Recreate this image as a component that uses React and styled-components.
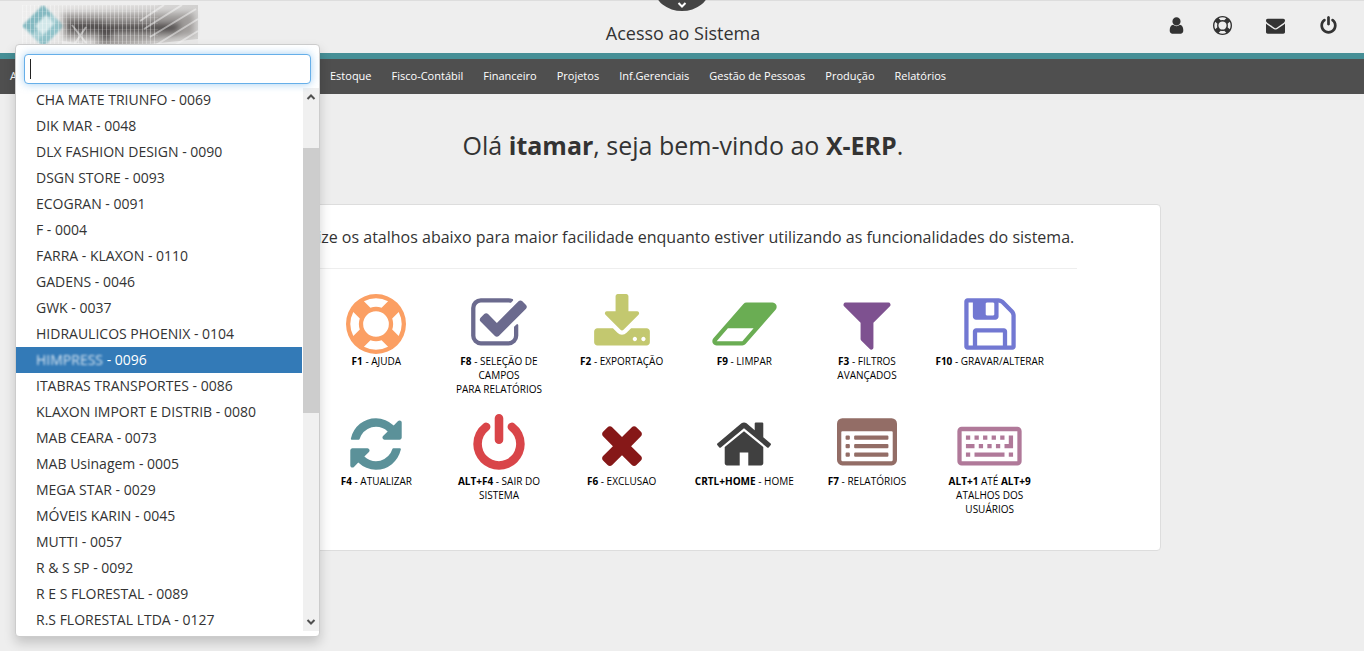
import { useState } from "react";
import styled, { createGlobalStyle } from "styled-components";

const GlobalStyle = createGlobalStyle`
  * {
    box-sizing: border-box;
  }

  body {
    margin: 0;
    color: #333;
    font-size: 14px;
    background-color: #eee;
    font-family: "Open Sans", "Noto Sans", sans-serif;
  }
`;

const StyledPage = styled.div`
  position: relative;
  min-height: 100vh;
  overflow: hidden;
`;

const StyledHeader = styled.header`
  height: 53px;
  display: grid;
  padding: 0 22px;
  position: relative;
  border-top: 1px solid #ddd;
  grid-template-columns: 1fr auto 1fr;
`;

const StyledLogo = styled.a`
  width: 178px;
  height: 42px;
  display: block;
  margin-top: 4px;
`;

const StyledTitle = styled.h1`
  margin: 0;
  padding: 20px 0 0 2px;
  font-size: 18px;
  font-weight: 400;
  line-height: 24px;
`;

const StyledPull = styled.button`
  top: -32px;
  left: 50%;
  width: 54px;
  height: 42px;
  border: 0;
  padding: 0 0 1px;
  display: flex;
  position: absolute;
  align-items: flex-end;
  justify-content: center;
  border-radius: 50%;
  background-color: #444;
  transform: translateX(-50%);
`;

const StyledActions = styled.div`
  gap: 34px;
  display: flex;
  padding: 15px 4px 0 0;
  align-items: flex-start;
  justify-content: flex-end;
`;

const StyledAction = styled.button`
  border: 0;
  padding: 0;
  color: #333;
  display: flex;
  cursor: pointer;
  background: none;
  margin-left: ${(props) => (props.$close ? "-7px" : "0")};
`;

const StyledNav = styled.nav`
  gap: 20px;
  height: 41px;
  display: flex;
  padding: 0 10px 2px;
  align-items: center;
  border-top: 6px solid #468f96;
  background-color: #4f4f4f;
`;

const StyledNavLink = styled.a`
  color: #fff;
  font-size: 11px;
  white-space: nowrap;
  text-decoration: none;
  flex: 0 0 ${(props) => (props.$wide ? "300px" : "auto")};
`;

const StyledMain = styled.main`
  padding: 31px 20px;
`;

const StyledWelcome = styled.h2`
  margin: 0;
  font-size: 25px;
  font-weight: 400;
  line-height: 40px;
  text-align: center;
  padding-left: 2px;
`;

const StyledCard = styled.section`
  width: 100%;
  max-width: 957px;
  min-height: 346px;
  margin: 39px auto 0;
  padding: 16px 83px 16px 85px;
  border-radius: 4px;
  border: 1px solid #ddd;
  background-color: #fff;
`;

const StyledHint = styled.p`
  margin: 0;
  font-size: 16px;
  line-height: 32px;
  text-align: center;
  white-space: nowrap;
  padding-bottom: 15px;
  border-bottom: 1px solid #eee;
`;

const StyledShortcuts = styled.div`
  display: grid;
  max-width: 736px;
  margin: 25px auto 0;
  grid-auto-rows: 120px;
  grid-template-columns: repeat(6, 1fr);
`;

const StyledShortcut = styled.div`
  color: #000;
  display: flex;
  padding: 0 5px;
  font-size: 10px;
  line-height: 14px;
  text-align: center;
  align-items: center;
  flex-direction: column;
`;

const StyledDropdown = styled.div`
  top: 44px;
  left: 15px;
  width: 305px;
  z-index: 10;
  position: absolute;
  border-radius: 4px;
  padding-bottom: 3px;
  border: 1px solid #ccc;
  background-color: #fff;
  box-shadow: 0 6px 12px rgba(0, 0, 0, 0.18);
`;

const StyledSearch = styled.div`
  position: relative;
  padding: 9px 8px 3px;
`;

const StyledInput = styled.input`
  width: 100%;
  height: 30px;
  outline: none;
  font: inherit;
  display: block;
  padding: 4px 5px;
  border-radius: 4px;
  caret-color: transparent;
  border: 1px solid #66afe9;
  box-shadow: 0 0 8px rgba(102, 175, 233, 0.6);
`;

const StyledCaret = styled.span`
  top: 14px;
  left: 14px;
  width: 1px;
  height: 20px;
  position: absolute;
  pointer-events: none;
  background-color: #222;
`;

const StyledListArea = styled.div`
  display: flex;
`;

const StyledList = styled.ul`
  flex: 1;
  margin: 0;
  padding: 0;
  list-style: none;
`;

const StyledOption = styled.button`
  border: 0;
  width: 100%;
  height: 26px;
  display: block;
  font: inherit;
  cursor: pointer;
  text-align: left;
  padding: 0 20px;
  line-height: 26px;
  white-space: nowrap;
  color: ${(props) => (props.$active ? "#fff" : "#333")};
  background-color: ${(props) => (props.$active ? "#337ab7" : "#fff")};
`;

const StyledBlur = styled.span`
  opacity: 0.8;
  filter: blur(1px);
`;

const StyledScroll = styled.div`
  width: 16px;
  display: flex;
  margin: 1px 0 2px 1px;
  flex-direction: column;
  background-color: #f0f0f0;
`;

const StyledScrollButton = styled.button`
  border: 0;
  padding: 0;
  height: 18px;
  display: flex;
  color: #505050;
  background: none;
  align-items: center;
  justify-content: center;
`;

const StyledThumb = styled.div`
  height: 265px;
  margin: 42px 0 auto;
  background-color: #cdcdcd;
`;

// Font Awesome 4 outlines, drawn on a 1792 unit em
const icons = {
  user: {
    d: "M1536 1399q0 109-62.5 187t-150.5 78h-854q-88 0-150.5-78t-62.5-187q0-85 8.5-160.5t31.5-152 58.5-131 94-89 134.5-34.5q131 128 313 128t313-128q76 0 134.5 34.5t94 89 58.5 131 31.5 152 8.5 160.5zm-256-887q0 159-112.5 271.5t-271.5 112.5-271.5-112.5-112.5-271.5 112.5-271.5 271.5-112.5 271.5 112.5 112.5 271.5z",
  },
  envelope: {
    d: "M1792 710v794q0 66-47 113t-113 47h-1472q-66 0-113-47t-47-113v-794q44 49 101 87 362 246 497 345 57 42 92.5 65.5t94.5 48 110 24.5h2q51 0 110-24.5t94.5-48 92.5-65.5q170-123 498-345 57-39 100-87zm0-294q0 79-49 151t-122 123q-376 261-468 325-10 7-42.5 31t-54 38.5-52 32.5-57.5 27-50 9h-2q-23 0-50-9t-57.5-27-52-32.5-54-38.5-42.5-31q-91-64-262-182.5t-205-142.5q-62-42-117-115.5t-55-136.5q0-78 41.5-130t118.5-52h1472q65 0 112.5 47t47.5 113z",
  },
  ring: {
    d: "M896 0q182 0 348 71t286 191 191 286 71 348-71 348-191 286-286 191-348 71-348-71-286-191-191-286-71-348 71-348 191-286 286-191 348-71zm0 128q-190 0-361 90l194 194q82-28 167-28t167 28l194-194q-171-90-361-90zm-678 1129l194-194q-28-82-28-167t28-167l-194-194q-90 171-90 361t90 361zm678 407q190 0 361-90l-194-194q-82 28-167 28t-167-28l-194 194q171 90 361 90zm0-384q159 0 271.5-112.5t112.5-271.5-112.5-271.5-271.5-112.5-271.5 112.5-112.5 271.5 112.5 271.5 271.5 112.5zm484-217l194 194q90-171 90-361t-90-361l-194 194q28 82 28 167t-28 167z",
  },
  power: {
    d: "M1664 896q0 156-61 298t-164 245-245 164-298 61-298-61-245-164-164-245-61-298q0-182 80.5-343t226.5-270q43-32 95.5-25t83.5 50q32 42 24.5 94.5t-49.5 84.5q-98 74-151.5 181t-53.5 228q0 104 40.5 198.5t109.5 163.5 163.5 109.5 198.5 40.5 198.5-40.5 163.5-109.5 109.5-163.5 40.5-198.5q0-121-53.5-228t-151.5-181q-42-32-49.5-84.5t24.5-94.5q31-43 84-50t95 25q146 109 226.5 270t80.5 343zm-640-768v640q0 52-38 90t-90 38-90-38-38-90v-640q0-52 38-90t90-38 90 38 38 90z",
  },
  check: {
    d: "M1472 930v318q0 119-84.5 203.5t-203.5 84.5h-832q-119 0-203.5-84.5t-84.5-203.5v-832q0-119 84.5-203.5t203.5-84.5h832q63 0 117 25 15 7 18 23 3 17-9 29l-49 49q-10 10-23 10-3 0-9-2-23-6-45-6h-832q-66 0-113 47t-47 113v832q0 66 47 113t113 47h832q66 0 113-47t47-113v-254q0-13 9-22l64-64q10-10 23-10 6 0 12 3 20 8 20 29zm231-489l-814 814q-24 24-57 24t-57-24l-430-430q-24-24-24-57t24-57l110-110q24-24 57-24t57 24l263 263 647-647q24-24 57-24t57 24l110 110q24 24 24 57t-24 57z",
  },
  download: {
    d: "M1344 1344q0-26-19-45t-45-19-45 19-19 45 19 45 45 19 45-19 19-45zm256 0q0-26-19-45t-45-19-45 19-19 45 19 45 45 19 45-19 19-45zm128-224v320q0 40-28 68t-68 28h-1472q-40 0-68-28t-28-68v-320q0-40 28-68t68-28h465l135 136q58 56 136 56t136-56l136-136h464q40 0 68 28t28 68zm-325-569q17 41-14 70l-448 448q-18 19-45 19t-45-19l-448-448q-31-29-14-70 17-39 59-39h256v-448q0-26 19-45t45-19h256q26 0 45 19t19 45v448h256q42 0 59 39z",
  },
  eraser: {
    wide: true,
    d: "M960 1408l336-384h-768l-336 384h768zm1013-1077q15 34 9.5 71.5t-30.5 65.5l-896 1024q-38 44-96 44h-768q-38 0-69.5-20.5t-47.5-54.5q-15-34-9.5-71.5t30.5-65.5l896-1024q38-44 96-44h768q38 0 69.5 20.5t47.5 54.5z",
  },
  filter: {
    d: "M1595 295q17 41-14 70l-493 493v742q0 42-39 59-13 5-25 5-27 0-45-19l-256-256q-19-19-19-45v-486l-493-493q-31-29-14-70 17-39 59-39h1280q42 0 59 39z",
  },
  floppy: {
    d: "M512 1536h768v-384h-768v384zm896 0h128v-896q0-14-10-38.5t-20-34.5l-281-281q-10-10-34-20t-39-10v416q0 40-28 68t-68 28h-576q-40 0-68-28t-28-68v-416h-128v1280h128v-416q0-40 28-68t68-28h832q40 0 68 28t28 68v416zm-384-928v-320q0-13-9.5-22.5t-22.5-9.5h-192q-13 0-22.5 9.5t-9.5 22.5v320q0 13 9.5 22.5t22.5 9.5h192q13 0 22.5-9.5t9.5-22.5zm640 32v928q0 40-28 68t-68 28h-1344q-40 0-68-28t-28-68v-1344q0-40 28-68t68-28h928q40 0 88 20t76 48l280 280q28 28 48 76t20 88z",
  },
  refresh: {
    d: "M1639 1056q0 5-1 7-64 268-268 434.5t-478 166.5q-146 0-282.5-55t-243.5-157l-129 129q-19 19-45 19t-45-19-19-45v-448q0-26 19-45t45-19h448q26 0 45 19t19 45-19 45l-137 137q71 66 161 102t187 36q134 0 250-65t186-179q11-17 53-117 8-23 30-23h192q13 0 22.5 9.5t9.5 22.5zm25-800v448q0 26-19 45t-45 19h-448q-26 0-45-19t-19-45 19-45l138-138q-148-137-349-137-134 0-250 65t-186 179q-11 17-53 117-8 23-30 23h-199q-13 0-22.5-9.5t-9.5-22.5v-7q65-268 270-434.5t480-166.5q146 0 284 55.5t245 156.5l130-129q19-19 45-19t45 19 19 45z",
  },
  times: {
    d: "M1490 1322q0 40-28 68l-136 136q-28 28-68 28t-68-28l-294-294-294 294q-28 28-68 28t-68-28l-136-136q-28-28-28-68t28-68l294-294-294-294q-28-28-28-68t28-68l136-136q28-28 68-28t68 28l294 294 294-294q28-28 68-28t68 28l136 136q28 28 28 68t-28 68l-294 294 294 294q28 28 28 68z",
  },
  home: {
    d: "M1472 992v480q0 26-19 45t-45 19h-384v-384h-256v384h-384q-26 0-45-19t-19-45v-480q0-1 .5-3t.5-3l575-474 575 474q1 2 1 6zm223-69l-62 74q-8 9-21 11h-3q-13 0-21-7l-692-577-692 577q-12 8-24 7-13-2-21-11l-62-74q-8-10-7-23.5t11-21.5l719-599q32-26 76-26t76 26l244 204v-195q0-14 9-23t23-9h192q14 0 23 9t9 23v408l219 182q10 8 11 21.5t-7 23.5z",
  },
  list: {
    d: "M160 128h1472q66 0 113 47t47 113v1088q0 66-47 113t-113 47h-1472q-66 0-113-47t-47-113v-1088q0-66 47-113t113-47zm0 384q-32 0-32 32v832q0 32 32 32h1472q32 0 32-32v-832q0-32-32-32zM288 640h64q32 0 32 32v64q0 32-32 32h-64q-32 0-32-32v-64q0-32 32-32zm0 256h64q32 0 32 32v64q0 32-32 32h-64q-32 0-32-32v-64q0-32 32-32zm0 256h64q32 0 32 32v64q0 32-32 32h-64q-32 0-32-32v-64q0-32 32-32zM544 640h960q32 0 32 32v64q0 32-32 32h-960q-32 0-32-32v-64q0-32 32-32zm0 256h960q32 0 32 32v64q0 32-32 32h-960q-32 0-32-32v-64q0-32 32-32zm0 256h960q32 0 32 32v64q0 32-32 32h-960q-32 0-32-32v-64q0-32 32-32z",
  },
  keyboard: {
    wide: true,
    d: "M192 384h1664q53 0 90.500 37.500t37.500 90.500v896q0 53-37.500 90.500t-90.500 37.500h-1664q-53 0-90.500-37.500t-37.500-90.500v-896q0-53 37.500-90.500t90.500-37.500zm0 128v896h1664v-896zM320 640h128v128h-128zm256 0h128v128h-128zm256 0h128v128h-128zm256 0h128v128h-128zm256 0h128v128h-128zm256 0h128v384h-256v-128h128zM320 896h256v128h-256zm384 0h128v128h-128zm256 0h128v128h-128zm256 0h128v128h-128zM320 1152h128v128h-128zm256 0h896v128h-896zm1024 0h128v128h-128z",
  },
};

const Icon = ({ name, size = 60, color = "currentColor" }) => {
  const { d, wide } = icons[name];
  const units = wide ? 2048 : 1792;

  return (
    <svg
      width={Math.round((size * units) / 1792)}
      height={size}
      viewBox={`0 0 ${units} 1792`}
      aria-hidden="true"
    >
      <path d={d} fill={color} fillRule="evenodd" />
    </svg>
  );
};

const Chevron = ({ up, color = "currentColor", size = 10 }) => (
  <svg width={size} height={size} viewBox="0 0 10 10" aria-hidden="true">
    <path
      d={up ? "M1.500 7 5 3.500 8.500 7" : "M1.500 3 5 6.500 8.500 3"}
      fill="none"
      stroke={color}
      strokeWidth="2"
    />
  </svg>
);

const Logo = () => (
  <svg width="178" height="42" viewBox="0 0 178 42" aria-hidden="true">
    <defs>
      <filter id="soft" x="-10%" y="-20%" width="120%" height="140%">
        <feGaussianBlur stdDeviation="3" />
      </filter>
      <filter id="edge" x="-10%" y="-10%" width="120%" height="120%">
        <feGaussianBlur stdDeviation="1" />
      </filter>
      <pattern id="mesh" width="4" height="6" patternUnits="userSpaceOnUse">
        <path d="M0 0V6" stroke="#fff" strokeWidth="2" strokeOpacity="0.350" />
        <path d="M0 0H4" stroke="#fff" strokeOpacity="0.250" />
      </pattern>
      <linearGradient id="fade" x1="0" x2="1">
        <stop offset="0" stopColor="#eee" />
        <stop offset="0.300" stopColor="#e4e3e2" />
        <stop offset="1" stopColor="#d2d1d0" />
      </linearGradient>
    </defs>
    <rect width="176" height="42" fill="url(#fade)" />
    <g filter="url(#edge)">
      <path d="M0 21 21 0 42 21 21 42Z" fill="#a9d0d5" />
      <path d="M0 21 21 0 30 9 11 29Z" fill="#84b9c1" />
      <path d="M13 21 24 10 33 20 22 31Z" fill="#d3e8ea" />
      <path d="M22 41 42 21 36 15 16 35Z" fill="#92c3ca" />
    </g>
    <g filter="url(#soft)">
      <path d="M40 8H172V30L142 34 94 42H74V34H42Z" fill="#a09d9b" />
      <path d="M44 16H78L88 18H160L154 28H92L84 38 76 28H46Z" fill="#4f4c4b" />
    </g>
    <rect width="136" height="42" fill="url(#mesh)" />
    <g stroke="#fff" strokeOpacity="0.450" strokeWidth="2">
      <path d="M118 16 142 0M122 24 160 0M128 32 174 4M134 40 176 14M150 42 176 26" />
      <path d="M50 20 64 38M64 22 52 40" />
    </g>
    <path d="M40 42V36L72 40V42ZM100 42 176 34V42Z" fill="#f4f4f4" opacity="0.700" />
  </svg>
);

const actions = [
  { icon: "user", label: "Usuário" },
  { icon: "ring", label: "Ajuda", close: true },
  { icon: "envelope", label: "Mensagens" },
  { icon: "power", label: "Sair" },
];

const menu = [
  "Administração",
  "Estoque",
  "Fisco-Contábil",
  "Financeiro",
  "Projetos",
  "Inf.Gerenciais",
  "Gestão de Pessoas",
  "Produção",
  "Relatórios",
];

const companies = [
  "CHA MATE TRIUNFO - 0069",
  "DIK MAR - 0048",
  "DLX FASHION DESIGN - 0090",
  "DSGN STORE - 0093",
  "ECOGRAN - 0091",
  "F - 0004",
  "FARRA - KLAXON - 0110",
  "GADENS - 0046",
  "GWK - 0037",
  "HIDRAULICOS PHOENIX - 0104",
  "HIMPRESS - 0096",
  "ITABRAS TRANSPORTES - 0086",
  "KLAXON IMPORT E DISTRIB - 0080",
  "MAB CEARA - 0073",
  "MAB Usinagem - 0005",
  "MEGA STAR - 0029",
  "MÓVEIS KARIN - 0045",
  "MUTTI - 0057",
  "R & S SP - 0092",
  "R E S FLORESTAL - 0089",
  "R.S FLORESTAL LTDA - 0127",
];

const shortcuts = [
  { icon: "ring", color: "#fb9f63", label: <><b>F1</b> - AJUDA</> },
  {
    icon: "check",
    color: "#6b6a8e",
    label: <><b>F8</b> - SELEÇÃO DE CAMPOS<br />PARA RELATÓRIOS</>,
  },
  { icon: "download", color: "#c3c86f", label: <><b>F2</b> - EXPORTAÇÃO</> },
  { icon: "eraser", color: "#6aad53", label: <><b>F9</b> - LIMPAR</> },
  { icon: "filter", color: "#7e5190", label: <><b>F3</b> - FILTROS AVANÇADOS</> },
  { icon: "floppy", color: "#7278d2", label: <><b>F10</b> - GRAVAR/ALTERAR</> },
  { icon: "refresh", color: "#5b9199", label: <><b>F4</b> - ATUALIZAR</> },
  { icon: "power", color: "#d94549", label: <><b>ALT+F4</b> - SAIR DO SISTEMA</> },
  { icon: "times", color: "#861818", label: <><b>F6</b> - EXCLUSAO</> },
  { icon: "home", color: "#404040", label: <><b>CRTL+HOME</b> - HOME</> },
  { icon: "list", color: "#936d66", label: <><b>F7</b> - RELATÓRIOS</> },
  {
    icon: "keyboard",
    color: "#b07999",
    label: <><b>ALT+1</b> ATÉ <b>ALT+9</b> ATALHOS DOS USUÁRIOS</>,
  },
];

const CompanySelect = () => {
  const [search, setSearch] = useState("");
  const [selected, setSelected] = useState("HIMPRESS - 0096");

  const filtered = companies.filter((company) =>
    company.toLowerCase().includes(search.toLowerCase())
  );

  return (
    <StyledDropdown>
      <StyledSearch>
        <StyledInput
          autoFocus
          type="text"
          value={search}
          aria-label="Buscar empresa"
          onChange={(e) => setSearch(e.target.value)}
        />
        {!search && <StyledCaret />}
      </StyledSearch>
      <StyledListArea>
        <StyledList>
          {filtered.map((company) => (
            <li key={company}>
              <StyledOption
                type="button"
                $active={company === selected}
                onClick={() => setSelected(company)}
              >
                {company.startsWith("HIMPRESS") ? (
                  <>
                    <StyledBlur>HIMPRESS</StyledBlur> - 0096
                  </>
                ) : (
                  company
                )}
              </StyledOption>
            </li>
          ))}
        </StyledList>
        <StyledScroll>
          <StyledScrollButton type="button" aria-label="Subir">
            <Chevron up />
          </StyledScrollButton>
          <StyledThumb />
          <StyledScrollButton type="button" aria-label="Descer">
            <Chevron />
          </StyledScrollButton>
        </StyledScroll>
      </StyledListArea>
    </StyledDropdown>
  );
};

const App = () => (
  <>
    <GlobalStyle />
    <StyledPage>
      <StyledHeader>
        <StyledLogo href="#" aria-label="Início">
          <Logo />
        </StyledLogo>
        <StyledTitle>Acesso ao Sistema</StyledTitle>
        <StyledActions>
          {actions.map(({ icon, label, close }) => (
            <StyledAction
              key={icon}
              type="button"
              aria-label={label}
              $close={close}
            >
              <Icon name={icon} size={19} />
            </StyledAction>
          ))}
        </StyledActions>
        <StyledPull type="button" aria-label="Abrir painel">
          <Chevron color="#fff" />
        </StyledPull>
      </StyledHeader>

      <StyledNav>
        {menu.map((item, index) => (
          <StyledNavLink key={item} href="#" $wide={index === 0}>
            {item}
          </StyledNavLink>
        ))}
      </StyledNav>

      <StyledMain>
        <StyledWelcome>
          Olá <b>itamar</b>, seja bem-vindo ao <b>X-ERP</b>.
        </StyledWelcome>
        <StyledCard>
          <StyledHint>
            Utilize os atalhos abaixo para maior facilidade enquanto estiver
            utilizando as funcionalidades do sistema.
          </StyledHint>
          <StyledShortcuts>
            {shortcuts.map(({ icon, color, label }) => (
              <StyledShortcut key={icon}>
                <Icon name={icon} color={color} />
                <span>{label}</span>
              </StyledShortcut>
            ))}
          </StyledShortcuts>
        </StyledCard>
      </StyledMain>

      <CompanySelect />
    </StyledPage>
  </>
);

export default App;
